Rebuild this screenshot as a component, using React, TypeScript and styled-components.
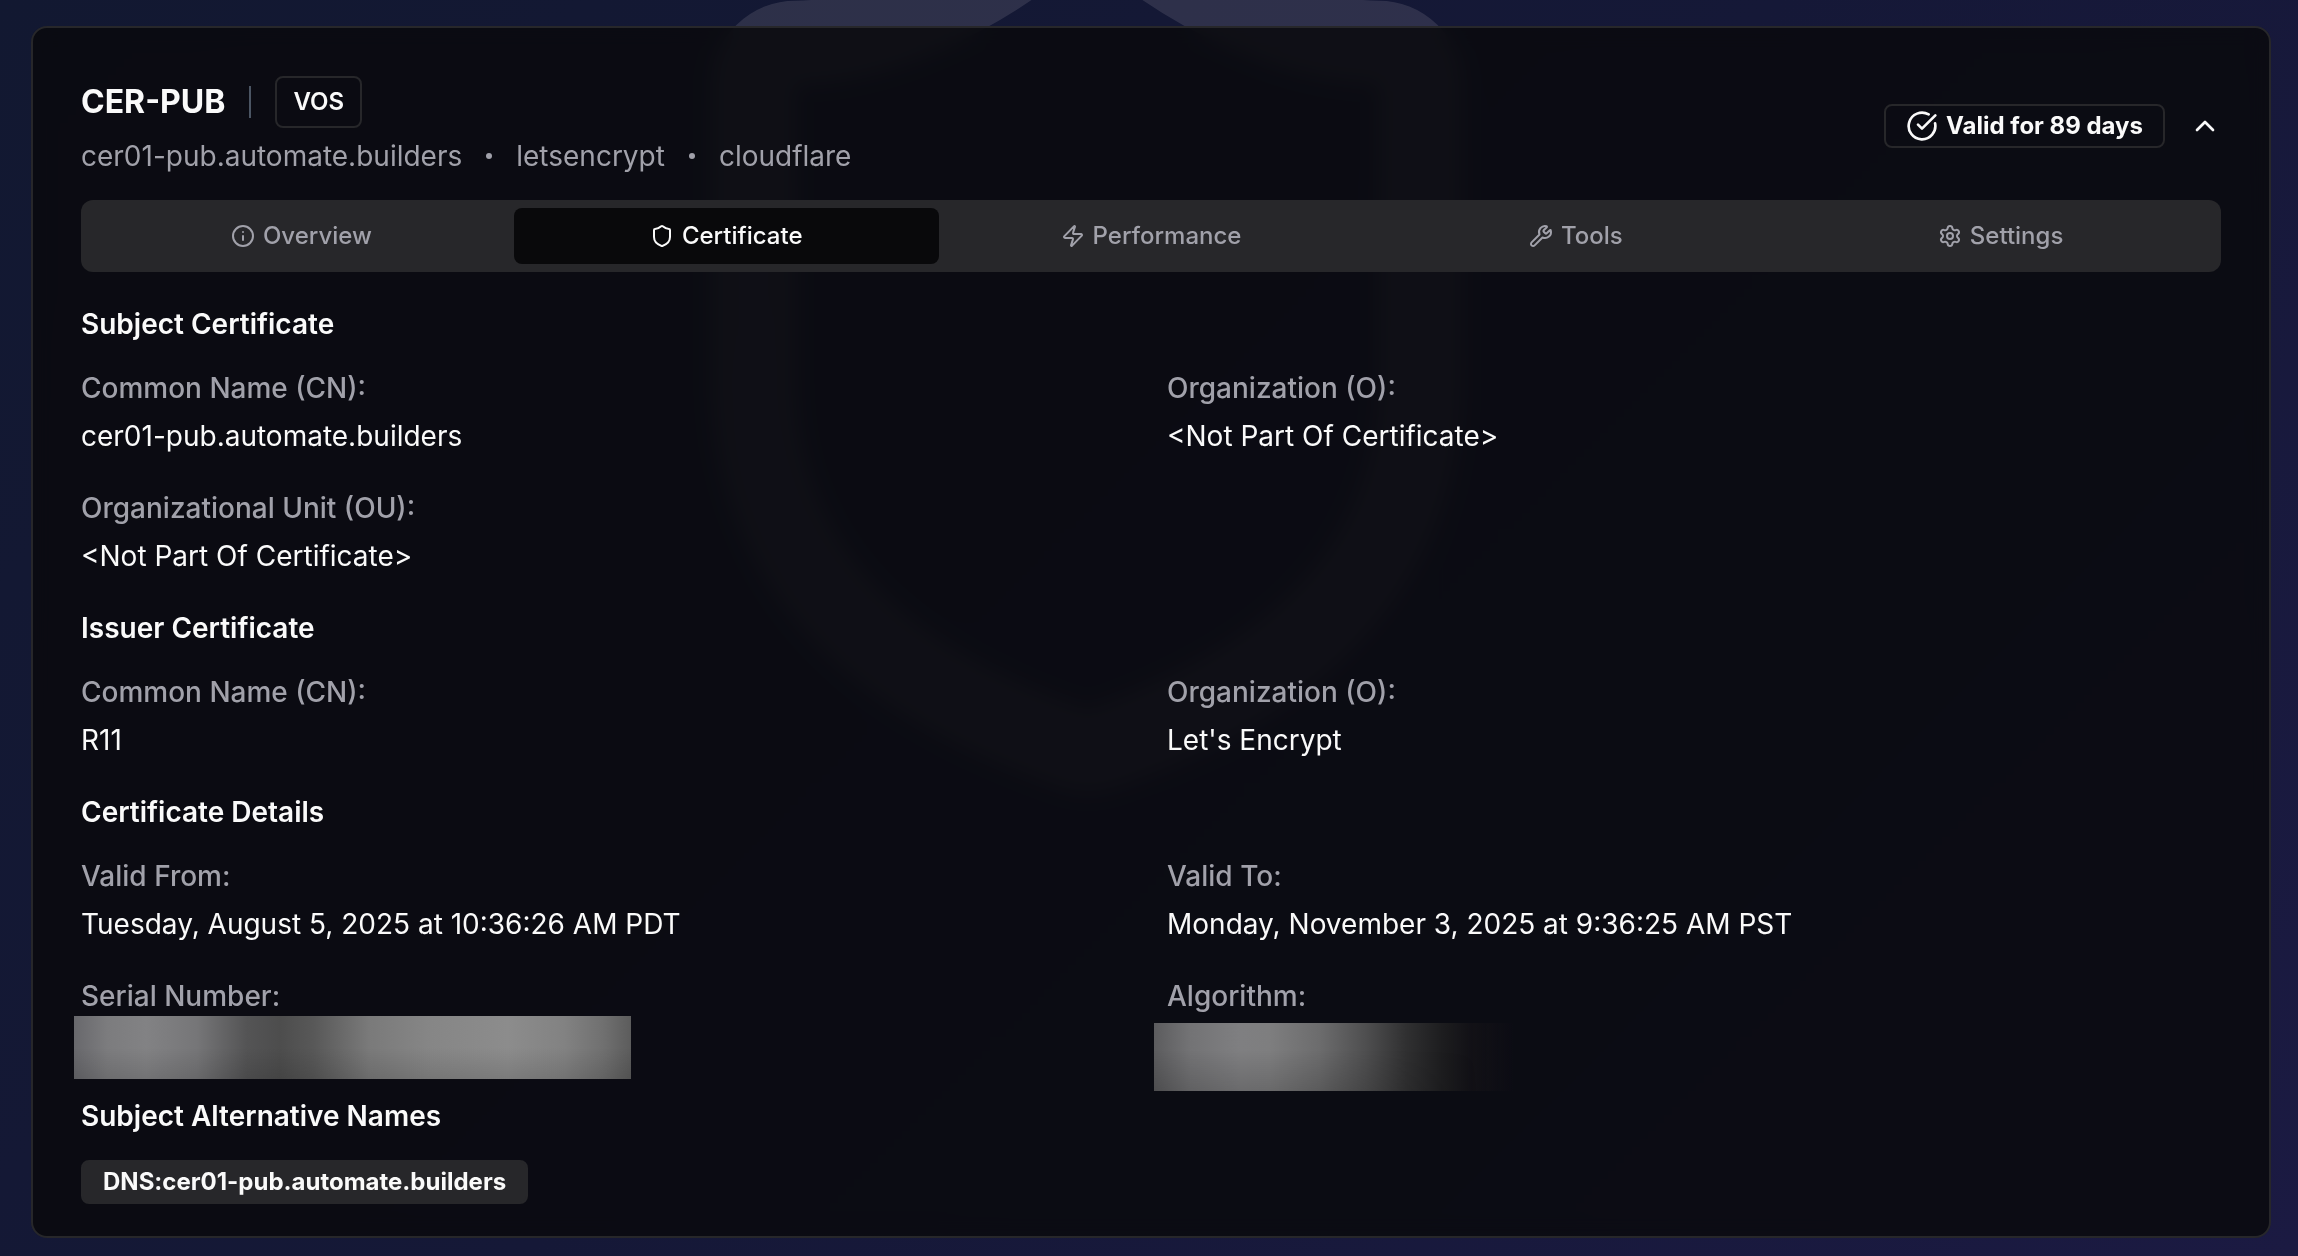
import { useState } from "react";
import styled, { createGlobalStyle } from "styled-components";
import { Info, Shield, Zap, Wrench, Settings, CircleCheckBig, ChevronUp } from "lucide-react";

const GlobalStyle = createGlobalStyle`
  * { box-sizing: border-box; }
  body {
    margin: 0;
    background: #141833;
    color: #fafafa;
    font-family: Inter, "Noto Sans", "Liberation Sans", sans-serif;
    font-size: 28px;
    line-height: 40px;
  }
  h2, h3, p, dl, dd, dt, ul { margin: 0; padding: 0; font: inherit; }
`;

const Page = styled.main`
  position: relative;
  min-height: 100vh;
  padding: 26px 27px 18px 31px;
  overflow: hidden;
  background: linear-gradient(135deg, #121831 0%, #151837 50%, #1b1a42 100%);
`;

const Watermark = styled(Shield)`
  position: absolute;
  top: -166px;
  left: calc(50% - 562px);
  width: 1000px;
  height: 1000px;
  color: #fff4f4;
  opacity: 0.11;
`;

const Card = styled.article`
  position: relative;
  padding: 48px 48px 32px;
  border: 2px solid #27272a;
  border-radius: 16px;
  background: rgba(9, 9, 12, 0.84);
  backdrop-filter: blur(10px);
`;

const Header = styled.header`
  display: flex;
  align-items: center;
  justify-content: space-between;
`;

const HeaderText = styled.div`
  display: flex;
  flex-direction: column;
  gap: 8px;
`;

const TitleRow = styled.div`
  display: flex;
  align-items: center;
  gap: 24px;
`;

const Title = styled.h2`
  && {
    font-size: 32px;
    font-weight: 700;
  }
`;

const Divider = styled.span`
  width: 2px;
  height: 32px;
  background: #4b5563;
`;

const Tag = styled.span`
  padding: 8px 16px;
  border: 2px solid #27272a;
  border-radius: 8px;
  font-size: 24px;
  font-weight: 600;
  line-height: 32px;
`;

const Meta = styled.div`
  display: flex;
  align-items: center;
  gap: 24px;
  color: #a1a1aa;
`;

const Dot = styled.span`
  width: 6px;
  height: 6px;
  border-radius: 50%;
  background: #a1a1aa;
`;

const HeaderStatus = styled.div`
  display: flex;
  align-items: center;
  gap: 24px;
`;

const Badge = styled.span<{ $filled?: boolean }>`
  display: inline-flex;
  align-items: center;
  gap: 8px;
  padding: 4px 20px;
  border: 2px solid #27272a;
  border-radius: 8px;
  background: ${(p) => (p.$filled ? "#27272a" : "transparent")};
  font-size: 24px;
  font-weight: 700;
  line-height: 32px;
`;

const CollapseButton = styled.button`
  display: flex;
  padding: 0;
  border: 0;
  background: none;
  color: #fafafa;
  cursor: pointer;
`;

const TabList = styled.div`
  display: grid;
  grid-template-columns: repeat(5, 1fr);
  margin: 24px 0 32px;
  padding: 8px;
  border-radius: 12px;
  background: #27272a;
`;

const Tab = styled.button<{ $active: boolean }>`
  display: flex;
  align-items: center;
  justify-content: center;
  gap: 8px;
  padding: 12px 24px;
  border: 0;
  border-radius: 8px;
  background: ${(p) => (p.$active ? "#09090b" : "transparent")};
  color: ${(p) => (p.$active ? "#fafafa" : "#a1a1aa")};
  font: inherit;
  font-size: 24px;
  font-weight: 500;
  line-height: 32px;
  cursor: pointer;
`;

const Panel = styled.div`
  display: flex;
  flex-direction: column;
  gap: 32px;
`;

const Section = styled.section`
  display: flex;
  flex-direction: column;
  align-items: stretch;
  gap: 24px;
`;

const SectionTitle = styled.h3`
  && {
    font-weight: 600;
  }
`;

const FieldGrid = styled.dl`
  display: grid;
  grid-template-columns: 1fr 1fr;
  gap: 32px;
`;

const Field = styled.div`
  display: flex;
  flex-direction: column;
  gap: 8px;
`;

const Label = styled.dt`
  && {
    color: #a1a1aa;
    font-weight: 500;
  }
`;

const Value = styled.dd`
  position: relative;
  min-height: 40px;
`;

const SerialMask = styled.span`
  position: absolute;
  top: -8px;
  left: -7px;
  width: 557px;
  height: 63px;
  background:
    linear-gradient(180deg, transparent 50%, rgba(0, 0, 0, 0.12) 100%),
    linear-gradient(90deg, #68686c 0%, #7c7c7e 6%, #828284 13%, #767678 22%, #545455 31%, #4d4d4d 37%, #585858 43%, #7a7a7a 53%, #868686 64%, #8c8c8c 78%, #828282 88%, #707070 95%, #5c5c5c 100%);
`;

const AlgorithmMask = styled.span`
  position: absolute;
  top: -1px;
  left: -13px;
  width: 360px;
  height: 68px;
  background: linear-gradient(90deg, #5c5c5e 0%, #737375 10%, #7f7f81 24%, #7e7e7f 32%, #6c6c6d 46%, #4e4e4f 59%, #303031 70%, #1d1d1f 80%, rgba(20, 19, 23, 0.8) 88%, rgba(11, 12, 16, 0) 100%);
  &::after {
    content: "";
    position: absolute;
    inset: 0;
    background: linear-gradient(180deg, transparent 40%, rgba(0, 0, 0, 0.16) 100%);
    mask-image: linear-gradient(90deg, #000 50%, transparent 90%);
  }
`;

const NameList = styled.ul`
  display: flex;
  list-style: none;
`;

const tabs = [
  { label: "Overview", Icon: Info },
  { label: "Certificate", Icon: Shield },
  { label: "Performance", Icon: Zap },
  { label: "Tools", Icon: Wrench },
  { label: "Settings", Icon: Settings },
];

const sections = [
  {
    title: "Subject Certificate",
    fields: [
      { label: "Common Name (CN):", value: "cer01-pub.automate.builders" },
      { label: "Organization (O):", value: "<Not Part Of Certificate>" },
      { label: "Organizational Unit (OU):", value: "<Not Part Of Certificate>" },
    ],
  },
  {
    title: "Issuer Certificate",
    fields: [
      { label: "Common Name (CN):", value: "R11" },
      { label: "Organization (O):", value: "Let's Encrypt" },
    ],
  },
  {
    title: "Certificate Details",
    fields: [
      { label: "Valid From:", value: "Tuesday, August 5, 2025 at 10:36:26 AM PDT" },
      { label: "Valid To:", value: "Monday, November 3, 2025 at 9:36:25 AM PST" },
      { label: "Serial Number:", value: <SerialMask /> },
      { label: "Algorithm:", value: <AlgorithmMask /> },
    ],
  },
];

export default function App() {
  const [active, setActive] = useState("Certificate");
  return (
    <Page>
      <GlobalStyle />
      <Watermark aria-hidden />
      <Card>
        <Header>
          <HeaderText>
            <TitleRow>
              <Title>CER-PUB</Title>
              <Divider />
              <Tag>VOS</Tag>
            </TitleRow>
            <Meta>
              <span>cer01-pub.automate.builders</span>
              <Dot />
              <span>letsencrypt</span>
              <Dot />
              <span>cloudflare</span>
            </Meta>
          </HeaderText>
          <HeaderStatus>
            <Badge>
              <CircleCheckBig size={32} />
              Valid for 89 days
            </Badge>
            <CollapseButton aria-label="Collapse">
              <ChevronUp size={32} />
            </CollapseButton>
          </HeaderStatus>
        </Header>
        <TabList role="tablist">
          {tabs.map(({ label, Icon }) => (
            <Tab
              key={label}
              role="tab"
              aria-selected={label === active}
              $active={label === active}
              onClick={() => setActive(label)}
            >
              <Icon size={24} strokeWidth={2} />
              {label}
            </Tab>
          ))}
        </TabList>
        <Panel role="tabpanel">
          {sections.map((section) => (
            <Section key={section.title}>
              <SectionTitle>{section.title}</SectionTitle>
              <FieldGrid>
                {section.fields.map((field) => (
                  <Field key={field.label}>
                    <Label>{field.label}</Label>
                    <Value>{field.value}</Value>
                  </Field>
                ))}
              </FieldGrid>
            </Section>
          ))}
          <Section>
            <SectionTitle>Subject Alternative Names</SectionTitle>
            <NameList>
              <li>
                <Badge $filled>DNS:cer01-pub.automate.builders</Badge>
              </li>
            </NameList>
          </Section>
        </Panel>
      </Card>
    </Page>
  );
}
